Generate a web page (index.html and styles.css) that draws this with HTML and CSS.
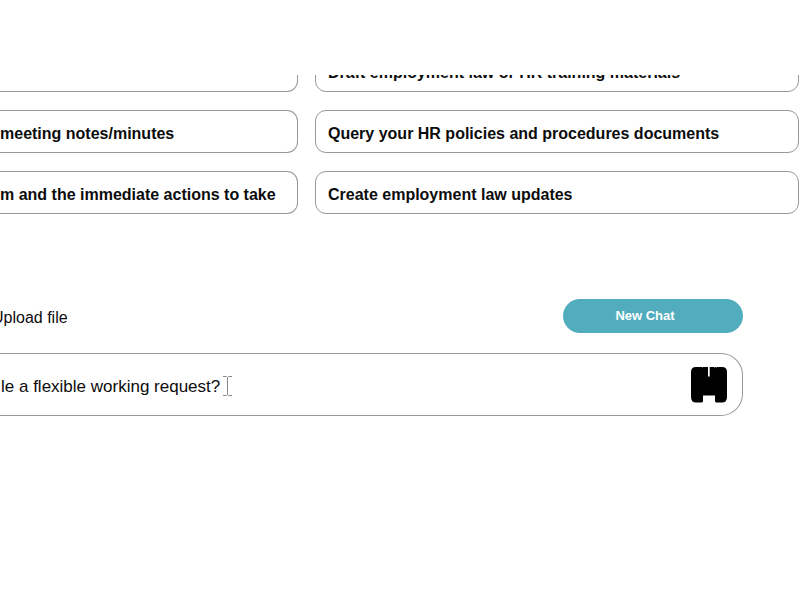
FILE: index.html
```
<!DOCTYPE html>
<html lang="en">
<head>
	<meta charset="UTF-8">
	<title>New Chat</title>
	<meta name="viewport" content="width=device-width">
	<link rel="stylesheet" href="styles.css">
</head>
<body>
	<main class="wrapper">
		<!--suggested prompts, the list is scrolled to its end-->
		<section class="prompts">
			<div class="prompt-grid">
				<button class="prompt prompt-left" type="button"></button>
				<button class="prompt" type="button">Draft employment law or HR training materials</button>
				<button class="prompt prompt-left" type="button">meeting notes/minutes</button>
				<button class="prompt" type="button">Query your HR policies and procedures documents</button>
				<button class="prompt prompt-left" type="button">m and the immediate actions to take</button>
				<button class="prompt" type="button">Create employment law updates</button>
			</div>
		</section>
		<!--upload and new chat-->
		<div class="toolbar">
			<button class="upload" type="button">Upload file</button>
			<button class="new-chat" type="button">New Chat</button>
		</div>
		<!--question box-->
		<form class="ask">
			<input class="question" type="text" aria-label="Question" value="le a flexible working request?">
			<svg class="ibeam" viewBox="0 0 9 20" aria-hidden="true">
				<path d="M0 0.5H3.500L4.500 1.500L5.500 0.500H9M4.500 1.500V18.500M0 19.500H3.500L4.500 18.500L5.500 19.500H9"/>
			</svg>
			<button class="send" type="button" aria-label="Send">
				<svg viewBox="0 0 36 37" aria-hidden="true">
					<path d="M5 1H11L11.500 1.700L12 1H17V10.500H18.700V1H23L23.500 2L24 1H25L25.500 1.700L26 1H31Q36 1 36 6V31Q36 36.500 31 36.500H25L24 35.500V29.500H12V35.500L11 36.500H5Q0 36.500 0 31V6Q0 1 5 1Z"/>
				</svg>
			</button>
		</form>
	</main>
</body>
</html>
```

FILE: styles.css
```
*{
	box-sizing:border-box;
}
body{
	margin:0;
	background:#fff;
	color:#0c0c0c;
	font-family:"Liberation Sans",Arial,sans-serif;
	overflow-x:hidden;
}
button,input{
	font:inherit;
	color:inherit;
	background:none;
	border:0;
	padding:0;
	margin:0;
}
.wrapper{
	padding-top:75px;
}
/*prompts*/
.prompts{
	display:flex;
	flex-direction:column;
	justify-content:flex-end;
	height:139px;
	overflow:hidden;
}
.prompt-grid{
	display:grid;
	grid-template-columns:minmax(0,298fr) minmax(0,484fr);
	gap:18px 17px;
	padding-right:1px;
}
.prompt{
	height:43px;
	padding:4px 12px 0;
	border:1px solid #999;
	border-radius:11px;
	font-size:16px;
	font-weight:bold;
	text-align:left;
	white-space:nowrap;
}
.prompt-left{
	padding-left:0;
	border-left:0;
	border-radius:0 11px 11px 0;
}
/*toolbar*/
.toolbar{
	display:flex;
	justify-content:space-between;
	align-items:center;
	margin:85px 57px 20px -8px;
}
.upload{
	padding-top:4px;
	font-size:16px;
}
.new-chat{
	width:180px;
	height:34px;
	padding:0 16px 2px 0;
	border-radius:17px;
	background:#51adbe;
	color:#fff;
	font-size:13px;
	font-weight:bold;
}
/*question box*/
.ask{
	position:relative;
	display:flex;
	align-items:center;
	height:63px;
	margin-right:57px;
	padding-right:15px;
	border:1px solid #999;
	border-left:0;
	border-radius:0 22px 22px 0;
}
.question{
	flex:1;
	min-width:0;
	height:40px;
	padding:4px 0 0 1px;
	outline:0;
	font-size:17px;
}
.ibeam{
	position:absolute;
	left:223px;
	top:22px;
	width:9px;
	height:20px;
	fill:none;
	stroke:#888;
}
.send{
	width:36px;
	height:37px;
}
.send svg{
	display:block;
	width:36px;
	height:37px;
	fill:#000;
}
```
